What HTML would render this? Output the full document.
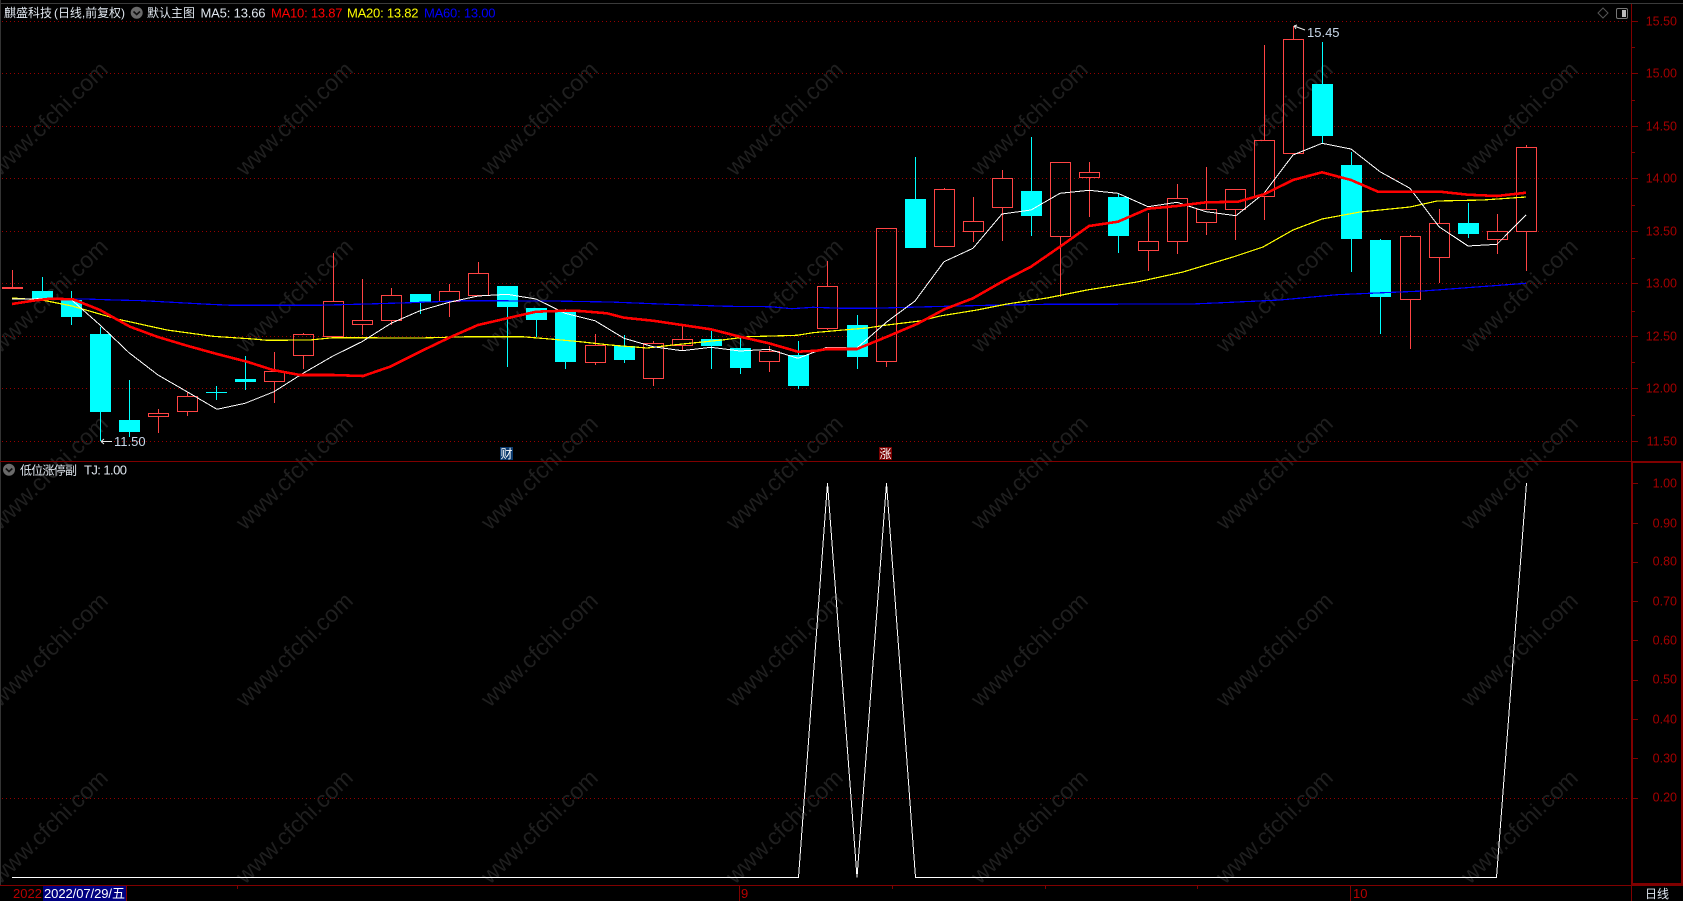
<!DOCTYPE html>
<html><head><meta charset="utf-8"><title>K</title>
<style>
html,body{margin:0;padding:0;background:#000;width:1683px;height:901px;overflow:hidden}
svg{position:absolute;left:0;top:0;display:block}
text{font-family:"Liberation Sans","Noto Sans CJK SC",sans-serif}
.wm text{font-size:23px;fill:#1f1f1f}
.ax text{font-size:12.5px;fill:#a50000;text-anchor:end}
.hd{font-size:13px;fill:#dfe6ee}
.cn{font-size:12px;fill:#dfe6ee}
</style></head><body>
<svg width="1683" height="901" viewBox="0 0 1683 901">
<rect width="1683" height="901" fill="#000"/>
<g class="wm">
<text transform="translate(0 177) rotate(-44)">www.cfchi.com</text><text transform="translate(245 177) rotate(-44)">www.cfchi.com</text><text transform="translate(490 177) rotate(-44)">www.cfchi.com</text><text transform="translate(735 177) rotate(-44)">www.cfchi.com</text><text transform="translate(980 177) rotate(-44)">www.cfchi.com</text><text transform="translate(1225 177) rotate(-44)">www.cfchi.com</text><text transform="translate(1470 177) rotate(-44)">www.cfchi.com</text>
<text transform="translate(0 354) rotate(-44)">www.cfchi.com</text><text transform="translate(245 354) rotate(-44)">www.cfchi.com</text><text transform="translate(490 354) rotate(-44)">www.cfchi.com</text><text transform="translate(735 354) rotate(-44)">www.cfchi.com</text><text transform="translate(980 354) rotate(-44)">www.cfchi.com</text><text transform="translate(1225 354) rotate(-44)">www.cfchi.com</text><text transform="translate(1470 354) rotate(-44)">www.cfchi.com</text>
<text transform="translate(0 531) rotate(-44)">www.cfchi.com</text><text transform="translate(245 531) rotate(-44)">www.cfchi.com</text><text transform="translate(490 531) rotate(-44)">www.cfchi.com</text><text transform="translate(735 531) rotate(-44)">www.cfchi.com</text><text transform="translate(980 531) rotate(-44)">www.cfchi.com</text><text transform="translate(1225 531) rotate(-44)">www.cfchi.com</text><text transform="translate(1470 531) rotate(-44)">www.cfchi.com</text>
<text transform="translate(0 708) rotate(-44)">www.cfchi.com</text><text transform="translate(245 708) rotate(-44)">www.cfchi.com</text><text transform="translate(490 708) rotate(-44)">www.cfchi.com</text><text transform="translate(735 708) rotate(-44)">www.cfchi.com</text><text transform="translate(980 708) rotate(-44)">www.cfchi.com</text><text transform="translate(1225 708) rotate(-44)">www.cfchi.com</text><text transform="translate(1470 708) rotate(-44)">www.cfchi.com</text>
<text transform="translate(0 885) rotate(-44)">www.cfchi.com</text><text transform="translate(245 885) rotate(-44)">www.cfchi.com</text><text transform="translate(490 885) rotate(-44)">www.cfchi.com</text><text transform="translate(735 885) rotate(-44)">www.cfchi.com</text><text transform="translate(980 885) rotate(-44)">www.cfchi.com</text><text transform="translate(1225 885) rotate(-44)">www.cfchi.com</text><text transform="translate(1470 885) rotate(-44)">www.cfchi.com</text>
</g>
<!-- frame -->
<g shape-rendering="crispEdges">
<rect x="0" y="3" width="1683" height="1" fill="#3a3a3a"/>
<rect x="0" y="0" width="1" height="885" fill="#333"/>
<!-- grid -->
<g stroke="#960000" stroke-width="1" stroke-dasharray="1 3" fill="none">
<path d="M2 21.5H1630"/><path d="M2 73.5H1630"/><path d="M2 126.5H1630"/><path d="M2 178.5H1630"/><path d="M2 231.5H1630"/><path d="M2 283.5H1630"/><path d="M2 336.5H1630"/><path d="M2 388.5H1630"/><path d="M2 441.5H1630"/><path d="M2 798.5H1630"/>
</g>
<!-- axes -->
<g stroke="#800000" stroke-width="1" fill="none">
<path d="M1631.5 4V461"/>
<path d="M0 461.5H1683"/>
<path d="M0 885.5H1683"/>
<path d="M1631.5 885V901"/>
<path d="M739.5 885V901M1350.5 885V901M43.5 885V901M126.5 885V901"/>
<path d="M237.5 885V889M892.5 885V889M1045.5 885V889M1197.5 885V889"/>
<path d="M1632 21.5H1638M1632 73.5H1638M1632 126.5H1638M1632 178.5H1638M1632 231.5H1638M1632 283.5H1638M1632 336.5H1638M1632 388.5H1638M1632 441.5H1638"/>
<path d="M1632 47.5H1635M1632 100.5H1635M1632 152.5H1635M1632 205.5H1635M1632 258.5H1635M1632 311.5H1635M1632 362.5H1635M1632 415.5H1635"/>
<path d="M1633 483.5H1638M1633 523.5H1638M1633 562.5H1638M1633 601.5H1638M1633 640.5H1638M1633 680.5H1638M1633 719.5H1638M1633 758.5H1638M1633 798.5H1638"/>
</g>
<rect x="1631" y="461" width="2" height="424" fill="#800000"/>
<rect x="1681" y="461" width="2" height="424" fill="#800000"/>
<rect x="1631" y="461" width="52" height="2" fill="#800000"/>
<rect x="1631" y="883" width="52" height="2" fill="#800000"/>
</g>
<!-- candles -->
<g shape-rendering="crispEdges">
<g fill="#0ff">
<rect x="32" y="291" width="21" height="8"/><rect x="61" y="300" width="21" height="17"/><rect x="90" y="334" width="21" height="78"/><rect x="119" y="420" width="21" height="12"/><rect x="206" y="392" width="21" height="1"/><rect x="235" y="379" width="21" height="3"/><rect x="410" y="294" width="21" height="8"/><rect x="497" y="286" width="21" height="21"/><rect x="526" y="308" width="21" height="12"/><rect x="555" y="312" width="21" height="50"/><rect x="614" y="346" width="21" height="14"/><rect x="701" y="339" width="21" height="7"/><rect x="730" y="348" width="21" height="20"/><rect x="788" y="355" width="21" height="31"/><rect x="847" y="325" width="21" height="32"/><rect x="905" y="199" width="21" height="49"/><rect x="1021" y="191" width="21" height="25"/><rect x="1108" y="197" width="21" height="39"/><rect x="1312" y="84" width="21" height="52"/><rect x="1341" y="165" width="21" height="74"/><rect x="1370" y="240" width="21" height="57"/><rect x="1458" y="223" width="21" height="11"/>
</g>
<path stroke="#0ff" fill="none" d="M42.5 277V291M71.5 291V325M100.5 327V441M129.5 380V437M216.5 386V400M245.5 356V390M420.5 302V314M507.5 307V367M536.5 320V337M565.5 309V369M624.5 335V363M711.5 331V369M740.5 337V374M798.5 341V389M857.5 315V369M915.5 157V199M1031.5 137V236M1118.5 194V253M1322.5 42V144M1351.5 152V272M1380.5 239V334M1468.5 203V238"/>
<g fill="none" stroke="#f44" stroke-width="1">
<rect x="2" y="287" width="21" height="2" fill="#f44" stroke="none"/>
<path d="M12.5 270V287"/>
<rect x="148.5" y="413.5" width="20" height="3"/><path d="M158.5 409V413M158.5 417V433"/>
<rect x="177.5" y="396.5" width="20" height="15"/><path d="M187.5 392V396M187.5 412V416"/>
<rect x="264.5" y="371.5" width="20" height="10"/><path d="M274.5 352V371M274.5 382V403"/>
<rect x="293.5" y="334.5" width="20" height="21"/><path d="M303.5 333V334M303.5 356V369"/>
<rect x="323.5" y="301.5" width="20" height="35"/><path d="M333.5 253V301"/>
<rect x="352.5" y="320.5" width="20" height="4"/><path d="M362.5 279V320M362.5 325V335"/>
<rect x="381.5" y="295.5" width="20" height="25"/><path d="M391.5 288V295M391.5 321V325"/>
<rect x="439.5" y="291.5" width="20" height="10"/><path d="M449.5 284V291M449.5 302V317"/>
<rect x="468.5" y="273.5" width="20" height="22"/><path d="M478.5 262V273"/>
<rect x="585.5" y="345.5" width="20" height="17"/><path d="M595.5 334V345M595.5 363V365"/>
<rect x="643.5" y="343.5" width="20" height="35"/><path d="M653.5 341V343M653.5 379V386"/>
<rect x="672.5" y="339.5" width="20" height="6"/><path d="M682.5 325V339M682.5 346V350"/>
<rect x="759.5" y="351.5" width="20" height="10"/><path d="M769.5 346V351M769.5 362V372"/>
<rect x="817.5" y="286.5" width="20" height="42"/><path d="M827.5 261V286M827.5 329V330"/>
<rect x="876.5" y="228.5" width="20" height="133"/><path d="M886.5 362V367"/>
<rect x="934.5" y="189.5" width="20" height="57"/><path d="M944.5 188V189"/>
<rect x="963.5" y="221.5" width="20" height="10"/><path d="M973.5 197V221M973.5 232V242"/>
<rect x="992.5" y="178.5" width="20" height="29"/><path d="M1002.5 170V178M1002.5 208V241"/>
<rect x="1050.5" y="162.5" width="20" height="74"/><path d="M1060.5 237V297"/>
<rect x="1079.5" y="172.5" width="20" height="5"/><path d="M1089.5 162V172M1089.5 178V217"/>
<rect x="1138.5" y="241.5" width="20" height="9"/><path d="M1148.5 213V241M1148.5 251V271"/>
<rect x="1167.5" y="198.5" width="20" height="43"/><path d="M1177.5 184V198M1177.5 242V254"/>
<rect x="1196.5" y="209.5" width="20" height="13"/><path d="M1206.5 167V209M1206.5 223V235"/>
<rect x="1225.5" y="189.5" width="20" height="20"/><path d="M1235.5 210V240"/>
<rect x="1254.5" y="140.5" width="20" height="56"/><path d="M1264.5 45V140M1264.5 197V220"/>
<rect x="1283.5" y="39.5" width="20" height="114"/><path d="M1293.5 26V39"/>
<rect x="1400.5" y="236.5" width="20" height="63"/><path d="M1410.5 235V236M1410.5 300V349"/>
<rect x="1429.5" y="223.5" width="20" height="34"/><path d="M1439.5 209V223M1439.5 258V283"/>
<rect x="1487.5" y="231.5" width="20" height="8"/><path d="M1497.5 214V231M1497.5 240V254"/>
<rect x="1516.5" y="147.5" width="20" height="84"/><path d="M1526.5 145V147M1526.5 232V271"/>
</g>
</g>
<!-- MA lines -->
<g fill="none" shape-rendering="crispEdges" stroke-linejoin="round">
<polyline stroke="#0000ff" stroke-width="1.2" points="12,299 85,299 115,300 143,300.7 209,304.3 232,305.3 317,305.3 367,304 410,302.7 463,300.7 552,301 610,302 668,304.3 727,306.3 770,306.7 792,308.7 813,307.3 843,308.3 872,308.3 930,306.7 988,305.3 1047,304.3 1192,304 1222,302.7 1280,300 1337,294.7 1423,291 1526,283.3"/>
<polyline stroke="#ffff00" stroke-width="1.2" points="12,298 42,300 72,306 117,319 167,330 213,336.3 253,339 267,340.3 310,340 333,337.7 420,338 470,336.7 522,336.7 550,339 580,341.7 610,345 647,348 673,345 722,340 748,336.7 797,335.3 813,332.7 840,330.3 867,328 887,325 920,321 940,316 977,310 1007,304 1047,298 1087,290 1137,282 1183,272 1233,257 1263,247 1293,230 1322,219 1360,212 1410,207 1437,201 1483,200 1526,197"/>
<polyline stroke="#ffffff" stroke-width="1" points="12,299 42,298.7 71,299.3 100,325 129,352.7 158,375 187,391.7 217,409.3 245,403.3 274,391.7 303,373.3 333,356 362,341.7 391,323.3 420,310.7 449,302.3 478,296 507,294.3 536,299 565,313.3 595,320.7 624,338.3 653,346.7 682,350.7 711,347.3 740,351 769,349.3 798,358.3 827,347.3 857,348 887,321.7 915,301 944,261.7 973,248.3 1002,214 1031,210 1060,193.3 1089,190.3 1118,193.3 1148,206.7 1177,202.3 1206,211.7 1236,215.7 1264,193.3 1293,155 1322,143.3 1351,149 1380,171.7 1410,188.3 1439,226.7 1468,246 1497,244.3 1526,215"/>
<polyline stroke="#ff0000" stroke-width="2.6" points="12,304 33,300.7 50,298.7 73,299.3 100,310 130,326.7 157,336.7 187,345.7 217,354 247,361.7 273,370 300,375 333,375 363,376 390,366.7 420,351.7 450,337.3 478,325 507,318.3 536,311.7 565,310.7 580,311 607,313.3 624,317.7 653,320.7 682,325 711,329.3 740,336.7 769,343.3 798,351.7 817,350.7 827,349 857,349 887,336.7 917,324 945,309 973,298.3 1002,281.7 1031,266.7 1060,246.7 1089,226 1118,221.7 1148,208.7 1177,206 1206,202.3 1238,201.7 1264,194.3 1293,180 1322,172.3 1351,180 1378,191.7 1440,191.7 1468,194.7 1497,196 1526,192.7"/>
</g>
<!-- lower pane line -->
<g fill="none" shape-rendering="crispEdges">
<polyline stroke="#fff" stroke-width="1" points="12,877.5 798.5,877.5 827.5,483 857,877.5 886.5,483 915.5,877.5 1496.5,877.5 1526.5,483"/>
</g>
<!-- annotations -->
<g fill="none" stroke="#e6e6e6" stroke-width="1">
<path d="M101 441.5H112M101 441.5L104 439M101 441.5L104 444"/>
<path d="M1294 26L1305 30M1294 26L1297 25M1294 26L1296 29"/>
</g>
<text x="114" y="446" font-size="13" fill="#c9d8ea">11.50</text>
<text x="1307" y="37" font-size="13" fill="#c9d8ea">15.45</text>
<!-- header -->
<text class="cn" x="4" y="17">麒盛科技</text>
<text class="cn" x="54" y="17" textLength="71">(日线,前复权)</text>
<circle cx="136.7" cy="12.7" r="6" fill="#6a6a6a"/>
<path d="M133.5 11.5L136.7 14.5L140 11.5" fill="none" stroke="#111" stroke-width="1.6"/>
<text class="cn" x="147" y="17">默认主图</text>
<text class="hd" x="200.5" y="17.5" textLength="65">MA5: 13.66</text>
<text x="271" y="17.5" font-size="13" fill="#f00" textLength="71.5">MA10: 13.87</text>
<text x="347" y="17.5" font-size="13" fill="#ff0" textLength="71.5">MA20: 13.82</text>
<text x="424" y="17.5" font-size="13" fill="#0000ff" textLength="71.5">MA60: 13.00</text>
<!-- lower label -->
<circle cx="9" cy="469.7" r="6" fill="#6a6a6a"/>
<path d="M5.8 468.5L9 471.5L12.3 468.5" fill="none" stroke="#111" stroke-width="1.6"/>
<text class="cn" x="20" y="474.5" textLength="57">低位涨停副</text>
<text class="hd" x="84" y="474.5" textLength="43">TJ: 1.00</text>
<!-- top-right icons -->
<path d="M1603 8L1608 13L1603 18L1598 13Z" fill="none" stroke="#555" stroke-width="1"/>
<rect x="1616.5" y="8.5" width="11" height="10" rx="1.5" fill="none" stroke="#777" stroke-width="1"/>
<rect x="1622" y="10" width="4" height="7" fill="#bbb"/>
<!-- axis labels -->
<g class="ax">
<text x="1677" y="25.5">15.50</text><text x="1677" y="77.5">15.00</text><text x="1677" y="130.5">14.50</text><text x="1677" y="182.5">14.00</text><text x="1677" y="235.5">13.50</text><text x="1677" y="287.5">13.00</text><text x="1677" y="340.5">12.50</text><text x="1677" y="392.5">12.00</text><text x="1677" y="445.5">11.50</text>
<text x="1677" y="487.5">1.00</text><text x="1677" y="527.5">0.90</text><text x="1677" y="565.5">0.80</text><text x="1677" y="605.5">0.70</text><text x="1677" y="644.5">0.60</text><text x="1677" y="683.5">0.50</text><text x="1677" y="723.5">0.40</text><text x="1677" y="762.5">0.30</text><text x="1677" y="801.5">0.20</text>
</g>
<!-- badges -->
<rect x="500" y="447" width="13" height="13" fill="#0b3a6e"/>
<text x="500.5" y="458" font-size="12" fill="#fff">财</text>
<rect x="879" y="447" width="13" height="13" fill="#7a0000"/>
<text x="879.5" y="458" font-size="12" fill="#fff">涨</text>
<!-- bottom -->
<text x="13" y="898" font-size="13" fill="#b80000" textLength="29">2022</text>
<rect x="43" y="886" width="83" height="15" fill="#000080"/>
<text x="44" y="898" font-size="13" fill="#fff" textLength="81">2022/07/29/五</text>
<text x="741" y="898" font-size="13" fill="#b80000">9</text>
<text x="1353" y="898" font-size="13" fill="#b80000">10</text>
<text class="cn" x="1645" y="898" textLength="24">日线</text>
</svg>
</body></html>
